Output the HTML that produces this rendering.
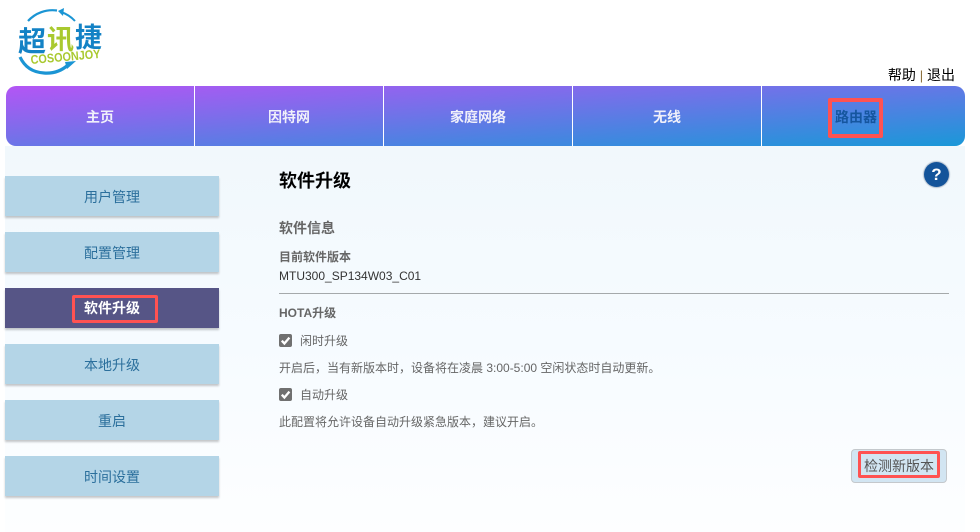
<!DOCTYPE html>
<html lang="zh"><head><meta charset="utf-8"><style>
*{box-sizing:border-box}
html,body{margin:0;padding:0}
body{width:980px;height:532px;position:relative;overflow:hidden;background:#fff;font-family:"Liberation Sans","Noto Sans CJK SC",sans-serif;color:#666}
.a{position:absolute;white-space:nowrap}
#nav{left:6px;top:86px;width:959px;height:60px;border-radius:10px;background:linear-gradient(176deg,#b455f5 0%,#1a98d8 100%);overflow:hidden}
.div{position:absolute;top:86px;width:1px;height:60px;background:#fff}
.nt{top:86px;height:60px;line-height:62px;width:188px;text-align:center;font-size:14px;font-weight:bold;color:#f0f0fa}
#content{left:5px;top:146px;width:960px;height:386px;background:linear-gradient(180deg,#f1f8fc 0%,#f6fbff 50%,#fdfeff 100%)}
.s{left:5px;width:214px;height:40px;background:#b4d5e7;color:#2b6f9c;font-size:14px;line-height:42px;text-align:center;box-shadow:0 2px 2px rgba(0,0,0,.22)}
.red{border:3px solid #ff5252;border-radius:2px}
.t12{font-size:12px;color:#666}
.cb{width:13px;height:13px;background:#707070;border-radius:2px}
</style></head><body>
<svg class="a" style="left:10px;top:5px" width="100" height="75" viewBox="0 0 100 75">
<path d="M18 16 A33 33 0 0 1 47 5.5" fill="none" stroke="#1b95d4" stroke-width="2.2"/>
<path d="M51 7 A33 33 0 0 1 65 16" fill="none" stroke="#1b95d4" stroke-width="2"/>
<path d="M10 52 Q17 67 34 68 Q48 69 58 60" fill="none" stroke="#1b95d4" stroke-width="3.2"/>
<path d="M55 57 L66 56 L57 64 Z" fill="#1b95d4"/>
<path d="M48 6 L54 3 L53 11 Z" fill="#1b95d4"/>
<text x="8" y="46" font-size="28" font-weight="bold" fill="#1382c5" font-family="'Noto Sans CJK SC',sans-serif">超</text>
<text x="37" y="44" font-size="27" font-weight="bold" fill="#a9c92f" font-family="'Noto Sans CJK SC',sans-serif">讯</text>
<text x="65" y="42" font-size="27" font-weight="bold" fill="#1382c5" font-family="'Noto Sans CJK SC',sans-serif">捷</text>
<text x="21" y="59" font-size="12.5" font-weight="bold" fill="#a9c92f" textLength="70" lengthAdjust="spacingAndGlyphs" transform="rotate(-5 21 59)">COSOONJOY</text>
</svg>
<div class="a" style="right:25px;top:66px;font-size:14px;color:#000;line-height:18px">帮助 <span style="color:#8a6d3b;font-size:13px">|</span> 退出</div>
<div class="a" id="content"></div>
<div class="a" id="nav"></div>
<div class="div" style="left:194px"></div><div class="div" style="left:383px"></div><div class="div" style="left:572px"></div><div class="div" style="left:761px"></div>
<div class="a nt" style="left:6px">主页</div>
<div class="a nt" style="left:195px">因特网</div>
<div class="a nt" style="left:384px">家庭网络</div>
<div class="a nt" style="left:573px">无线</div>
<div class="a nt" style="left:762px;color:#15569f">路由器</div>
<div class="a red" style="left:828px;top:98px;width:55px;height:40px;border-width:4px"></div>
<div class="a" style="left:924px;top:162px;width:25px;height:25px;border-radius:50%;background:#14549a;box-shadow:0 0 1px 1px rgba(90,110,140,.4);color:#fff;font-weight:bold;font-size:17px;line-height:25px;text-align:center">?</div>
<div class="a s" style="top:176px">用户管理</div>
<div class="a s" style="top:232px">配置管理</div>
<div class="a s" style="top:288px;background:#565586;color:#fff;font-weight:bold;line-height:41px">软件升级</div>
<div class="a red" style="left:72px;top:295px;width:86px;height:28px;border-width:3.5px"></div>
<div class="a s" style="top:344px">本地升级</div>
<div class="a s" style="top:400px">重启</div>
<div class="a s" style="top:456px">时间设置</div>
<div class="a" style="left:279px;top:170px;font-size:18px;line-height:22px;font-weight:bold;color:#000">软件升级</div>
<div class="a" style="left:279px;top:219px;font-size:14px;line-height:18px;font-weight:bold;color:#666">软件信息</div>
<div class="a" style="left:279px;top:249px;font-size:12px;line-height:16px;font-weight:bold;color:#666">目前软件版本</div>
<div class="a" style="left:279px;top:268px;font-size:12px;line-height:16px;color:#333">MTU300_SP134W03_C01</div>
<div class="a" style="left:279px;top:293px;width:670px;height:1px;background:#a5a9ab"></div>
<div class="a" style="left:279px;top:305px;font-size:12px;line-height:16px;font-weight:bold;color:#666">HOTA升级</div>
<div class="a cb" style="left:279px;top:334px"></div>
<svg class="a" style="left:279px;top:334px" width="13" height="13" viewBox="0 0 13 13"><path d="M2.8 6.7L5.4 9.5L10.4 3.6" fill="none" stroke="#fff" stroke-width="2.3"/></svg>
<div class="a t12" style="left:300px;top:333px;line-height:16px">闲时升级</div>
<div class="a t12" style="left:279px;top:360px;line-height:16px">开启后，当有新版本时，设备将在凌晨 3:00-5:00 空闲状态时自动更新。</div>
<div class="a cb" style="left:279px;top:388px"></div>
<svg class="a" style="left:279px;top:388px" width="13" height="13" viewBox="0 0 13 13"><path d="M2.8 6.7L5.4 9.5L10.4 3.6" fill="none" stroke="#fff" stroke-width="2.3"/></svg>
<div class="a t12" style="left:300px;top:387px;line-height:16px">自动升级</div>
<div class="a t12" style="left:279px;top:414px;line-height:16px">此配置将允许设备自动升级紧急版本，建议开启。</div>
<div class="a" style="left:851px;top:449px;width:96px;height:34px;background:#d2e5f2;border:1px solid #c4c8cc;border-radius:4px;font-size:14px;color:#555;line-height:33px;text-align:center">检测新版本</div>
<div class="a red" style="left:858px;top:451px;width:82px;height:27px;border-width:3.5px"></div>
</body></html>
